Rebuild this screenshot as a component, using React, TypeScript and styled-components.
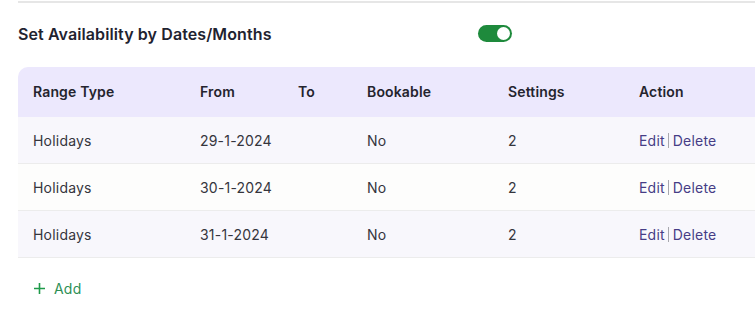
import React from "react";
import styled, { createGlobalStyle } from "styled-components";

const Global = createGlobalStyle`
  html, body { margin: 0; padding: 0; background: #ffffff; overflow: hidden; }
  body { font-family: Inter, "Noto Sans", sans-serif; -webkit-font-smoothing: antialiased; }
`;

const Page = styled.div`
  width: 760px;
  padding-left: 18px;
  box-sizing: border-box;
`;

const Divider = styled.div`
  margin-top: 1px;
  height: 2px;
  background: #e6e6e6;
`;

const TitleRow = styled.div`
  height: 64px;
  display: grid;
  grid-template-columns: 460px auto;
  align-items: center;
`;

const Title = styled.h2`
  margin: 0 0 2px;
  font-size: 16px;
  font-weight: 600;
  color: #1f2330;
  letter-spacing: 0.1px;
`;

const Toggle = styled.div<{ $on: boolean }>`
  width: 34px;
  height: 17px;
  border-radius: 9px;
  background: ${(p) => (p.$on ? "#1e8a3c" : "#ccc")};
  position: relative;
  margin-top: -4px;
  &::after {
    content: "";
    position: absolute;
    top: 2px;
    left: ${(p) => (p.$on ? "19px" : "2px")};
    width: 13px;
    height: 13px;
    border-radius: 50%;
    background: #fff;
  }
`;

const Table = styled.div`
  width: 800px;
  border-top-left-radius: 10px;
  overflow: hidden;
`;

const cols = "167px 98px 69px 141px 131px 1fr";

const HeaderRow = styled.div`
  display: grid;
  grid-template-columns: ${cols};
  height: 50px;
  box-sizing: border-box;
  padding-bottom: 1px;
  align-items: center;
  background: #ece8fd;
`;

const HeadCell = styled.div`
  padding-left: 15px;
  font-size: 14px;
  font-weight: 600;
  letter-spacing: 0.15px;
  color: #24242e;
`;

const Row = styled.div<{ $alt: boolean }>`
  display: grid;
  grid-template-columns: ${cols};
  height: 47px;
  box-sizing: border-box;
  padding-top: 1px;
  align-items: center;
  border-bottom: 1px solid #ececec;
  background: ${(p) => (p.$alt ? "#f8f7fc" : "#fdfdfc")};
`;

const Cell = styled.div`
  padding-left: 15px;
  font-size: 14px;
  letter-spacing: 0.2px;
  color: #35353d;
`;

const Actions = styled.div`
  padding-left: 15px;
  display: flex;
  align-items: center;
  font-size: 14px;
  letter-spacing: 0.2px;
  color: #463d86;
`;

const Sep = styled.span`
  width: 1px;
  height: 15px;
  background: #a8a8ae;
  margin: 0 4px 0 3px;
`;

const AddRow = styled.div`
  height: 60px;
  display: flex;
  align-items: center;
  padding-left: 15px;
  gap: 8px;
  color: #2e8f55;
  font-size: 14px;
  letter-spacing: 0.2px;
`;

const rows = [
  { type: "Holidays", from: "29-1-2024", to: "", bookable: "No", settings: "2" },
  { type: "Holidays", from: "30-1-2024", to: "", bookable: "No", settings: "2" },
  { type: "Holidays", from: "31-1-2024", to: "", bookable: "No", settings: "2" },
];

export default function App() {
  return (
    <>
      <Global />
      <Page>
        <Divider />
        <TitleRow>
          <Title>Set Availability by Dates/Months</Title>
          <Toggle $on />
        </TitleRow>
        <Table>
          <HeaderRow>
            <HeadCell>Range Type</HeadCell>
            <HeadCell>From</HeadCell>
            <HeadCell>To</HeadCell>
            <HeadCell>Bookable</HeadCell>
            <HeadCell>Settings</HeadCell>
            <HeadCell>Action</HeadCell>
          </HeaderRow>
          {rows.map((r, i) => (
            <Row key={i} $alt={i % 2 === 0}>
              <Cell>{r.type}</Cell>
              <Cell>{r.from}</Cell>
              <Cell>{r.to}</Cell>
              <Cell>{r.bookable}</Cell>
              <Cell>{r.settings}</Cell>
              <Actions>
                <span>Edit</span>
                <Sep />
                <span>Delete</span>
              </Actions>
            </Row>
          ))}
        </Table>
        <AddRow>
          <svg width="13" height="13" viewBox="0 0 13 13">
            <path d="M6.5 1v11M1 6.5h11" stroke="#1f9a4a" strokeWidth="1.6" />
          </svg>
          <span>Add</span>
        </AddRow>
      </Page>
    </>
  );
}
